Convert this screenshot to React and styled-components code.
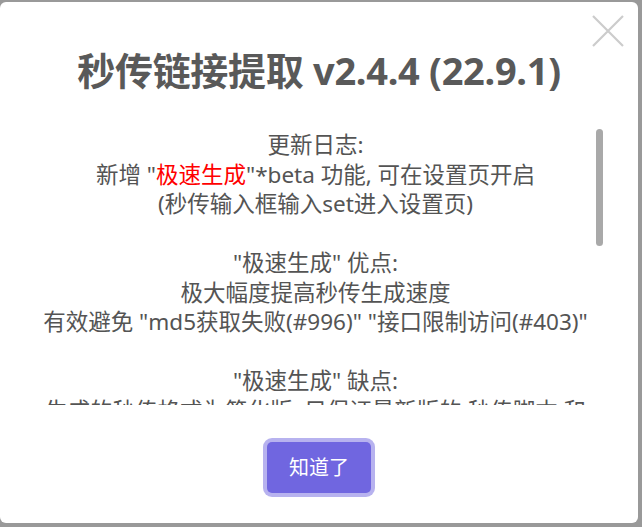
import React, { useEffect, useRef, useState } from 'react';
import styled, { createGlobalStyle } from 'styled-components';

const GlobalStyle = createGlobalStyle`
    html, body {
        margin: 0;
        padding: 0;
        background: #999;
        font-family: "Noto Sans", "Noto Sans CJK SC", sans-serif;
    }
`;

const notes = [
    { text: '更新日志:' },
    { parts: ['新增 "', { red: '极速生成' }, '"*beta 功能, 可在设置页开启'] },
    { text: '(秒传输入框输入set进入设置页)' },
    { text: '' },
    { text: '"极速生成" 优点:' },
    { text: '极大幅度提高秒传生成速度' },
    { text: '有效避免 "md5获取失败(#996)" "接口限制访问(#403)"' },
    { text: '' },
    { text: '"极速生成" 缺点:' },
    { text: '生成的秒传格式为简化版, 只保证最新版的 秒传脚本 和' },
    { text: '秒传网页 能够识别, 其他工具可能无法转存' },
    { text: '' },
    { text: '"极速生成" 失败时会自动切换为普通模式' },
    { text: '' },
    { text: '若遇到问题请前往反馈页提交' },
    { text: '' },
    { text: '本弹窗仅在版本更新后显示一次' },
    { text: '' },
    { text: '' },
    { text: '' },
    { text: '' },
    { text: '' },
];

const Overlay = styled.div`
    padding-top: 2px;
    height: 525px;
`;

const Popup = styled.div`
    position: relative;
    width: 638px;
    height: 521px;
    box-sizing: border-box;
    background: #fff;
    border-radius: 6px;
    display: flex;
    flex-direction: column;
    align-items: center;
    padding: 44px 0 30px;
`;

const CloseButton = styled.button`
    position: absolute;
    top: 12px;
    right: 13px;
    width: 34px;
    height: 34px;
    padding: 0;
    border: none;
    background: none;
    display: flex;
    align-items: center;
    justify-content: center;
    cursor: pointer;
    svg { display: block; }
`;

const Title = styled.h2`
    margin: 0;
    font-size: 38px;
    line-height: 48px;
    font-weight: 700;
    color: #595959;
    text-align: center;
    letter-spacing: -0.3px;
`;

const ContentWrap = styled.div`
    position: relative;
    align-self: stretch;
    margin: 34px 34px 0 36px;
    height: 277px;
`;

const Content = styled.div`
    height: 100%;
    overflow-y: auto;
    box-sizing: border-box;
    padding: 2px 9px 0 0;
    font-size: 22.5px;
    line-height: 29.5px;
    color: #545454;
    text-align: center;
    scrollbar-width: none;
    &::-webkit-scrollbar { display: none; }
`;

const Thumb = styled.div`
    position: absolute;
    right: 1px;
    width: 7px;
    border-radius: 4px;
    background: #a9a9a9;
`;

const Line = styled.div`
    min-height: 29.5px;
    white-space: nowrap;
`;

const Red = styled.span`
    color: #f00;
`;

const Actions = styled.div`
    margin-top: 37px;
    display: flex;
    justify-content: center;
`;

const ConfirmButton = styled.button`
    height: 51px;
    padding: 0 22px;
    border: none;
    border-radius: 5px;
    background: #7066e0;
    color: #fff;
    font-family: "Noto Sans", "Noto Sans CJK SC", sans-serif;
    font-size: 20px;
    line-height: 26px;
    box-shadow: 0 0 0 4px rgba(112, 102, 224, 0.5);
    cursor: pointer;
`;

function NoteLine({ note }) {
    if (note.parts) {
        return (
            <Line>
                {note.parts.map((p, i) =>
                    typeof p === 'string' ? <span key={i}>{p}</span> : <Red key={i}>{p.red}</Red>
                )}
            </Line>
        );
    }
    return <Line>{note.text}</Line>;
}

export default function App() {
    const scroller = useRef(null);
    const [thumb, setThumb] = useState({ top: 1, height: 116 });

    // hidden native scrollbar, so draw the thumb from the scroll metrics
    const measure = () => {
        const el = scroller.current;
        if (!el) return;
        const track = el.clientHeight - 2;
        const height = Math.max(20, (track * el.clientHeight) / el.scrollHeight);
        const range = el.scrollHeight - el.clientHeight;
        const top = 1 + (range > 0 ? (el.scrollTop / range) * (track - height) : 0);
        setThumb({ top, height });
    };

    useEffect(() => {
        measure();
    }, []);

    return (
        <>
            <GlobalStyle />
            <Overlay>
                <Popup>
                    <CloseButton aria-label='close'>
                        <svg width='34' height='34' viewBox='0 0 34 34'>
                            <path d='M2 2 L32 32 M32 2 L2 32' stroke='#ccc' strokeWidth='2.2' fill='none' />
                        </svg>
                    </CloseButton>
                    <Title>秒传链接提取 v2.4.4 (22.9.1)</Title>
                    <ContentWrap>
                        <Content ref={scroller} onScroll={measure}>
                            {notes.map((n, i) => (
                                <NoteLine key={i} note={n} />
                            ))}
                        </Content>
                        <Thumb style={{ top: thumb.top, height: thumb.height }} />
                    </ContentWrap>
                    <Actions>
                        <ConfirmButton>知道了</ConfirmButton>
                    </Actions>
                </Popup>
            </Overlay>
        </>
    );
}
